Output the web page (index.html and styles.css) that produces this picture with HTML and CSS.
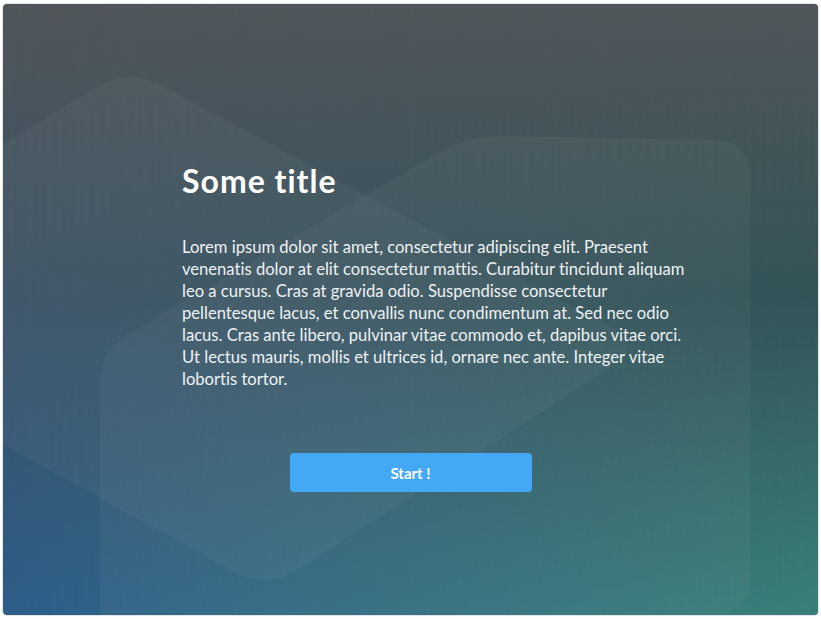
FILE: index.html
```html
<!DOCTYPE html>
<html lang="en">
<head>
<meta charset="utf-8">
<title>Some title</title>
<link rel="stylesheet" href="styles.css">
</head>
<body>
<div class="card">
  <svg class="shapes" viewBox="3 4 815 611" width="815" height="611" aria-hidden="true">
    <path class="shape" d="M231.9,570.8 L-227,318 Q-258,302 -226,285 L98,86 Q130,69 162,86 L609.7,326.1 Q645,345 611.4,366.8 L300.6,568.2 Q267,590 231.9,570.8 Z"/>
    <path class="shape" d="M100,620 V385 Q100,350 130,333 L440,152 Q470,135 505,136 L715,140 Q750,141 750,176 V575 Q750,615 710,615 V620 Z"/>
  </svg>
  <div class="content">
    <h1 class="title">Some title</h1>
    <p class="text">Lorem ipsum dolor sit amet, consectetur adipiscing elit. Praesent venenatis dolor at elit consectetur mattis. Curabitur tincidunt aliquam leo a cursus. Cras at gravida odio. Suspendisse consectetur pellentesque lacus, et convallis nunc condimentum at. Sed nec odio lacus. Cras ante libero, pulvinar vitae commodo et, dapibus vitae orci. Ut lectus mauris, mollis et ultrices id, ornare nec ante. Integer vitae lobortis tortor.</p>
  </div>
  <div class="actions">
    <button class="start" type="button">Start !</button>
  </div>
</div>
</body>
</html>
```
FILE: styles.css
```css
html, body {
  margin: 0;
  padding: 0;
  background: #ffffff;
}

body {
  padding: 4px 3px;
  font-family: "Lato", "Open Sans", "Liberation Sans", sans-serif;
  font-variant-ligatures: none;
}

.card {
  position: relative;
  width: 815px;
  height: 611px;
  border-radius: 4px;
  overflow: hidden;
  display: flex;
  flex-direction: column;
  background: linear-gradient(to bottom, #50565a 0%, #3b5265 48%, #2d5e8a 100%);
  box-shadow: 0 0 1px 1px rgba(0, 0, 0, 0.12);
}

.card::before {
  content: "";
  position: absolute;
  inset: 0;
  background: linear-gradient(to bottom, #50565a 0%, #335457 48%, #3a8078 100%);
  -webkit-mask-image: linear-gradient(to right, transparent 0%, #000 100%);
  mask-image: linear-gradient(to right, transparent 0%, #000 100%);
}

.shapes {
  position: absolute;
  left: 0;
  top: 0;
}

.shape {
  fill: #ffffff;
  fill-opacity: 0.035;
}

.content {
  position: relative;
  padding: 157px 0 0 179px;
  width: 510px;
}

.title {
  margin: 0;
  font-size: 32px;
  line-height: 40px;
  font-weight: 700;
  letter-spacing: 1px;
  color: #ffffff;
}

.text {
  margin: 35px 0 0;
  font-size: 16.6px;
  line-height: 22px;
  color: #eef1f3;
}

.actions {
  position: relative;
  display: flex;
  justify-content: center;
  margin-top: 63px;
}

.start {
  width: 242px;
  height: 39px;
  border: none;
  border-radius: 4px;
  background: #43a8f6;
  color: #ffffff;
  font-family: inherit;
  font-size: 15px;
  font-weight: 700;
  padding: 0;
}
```
